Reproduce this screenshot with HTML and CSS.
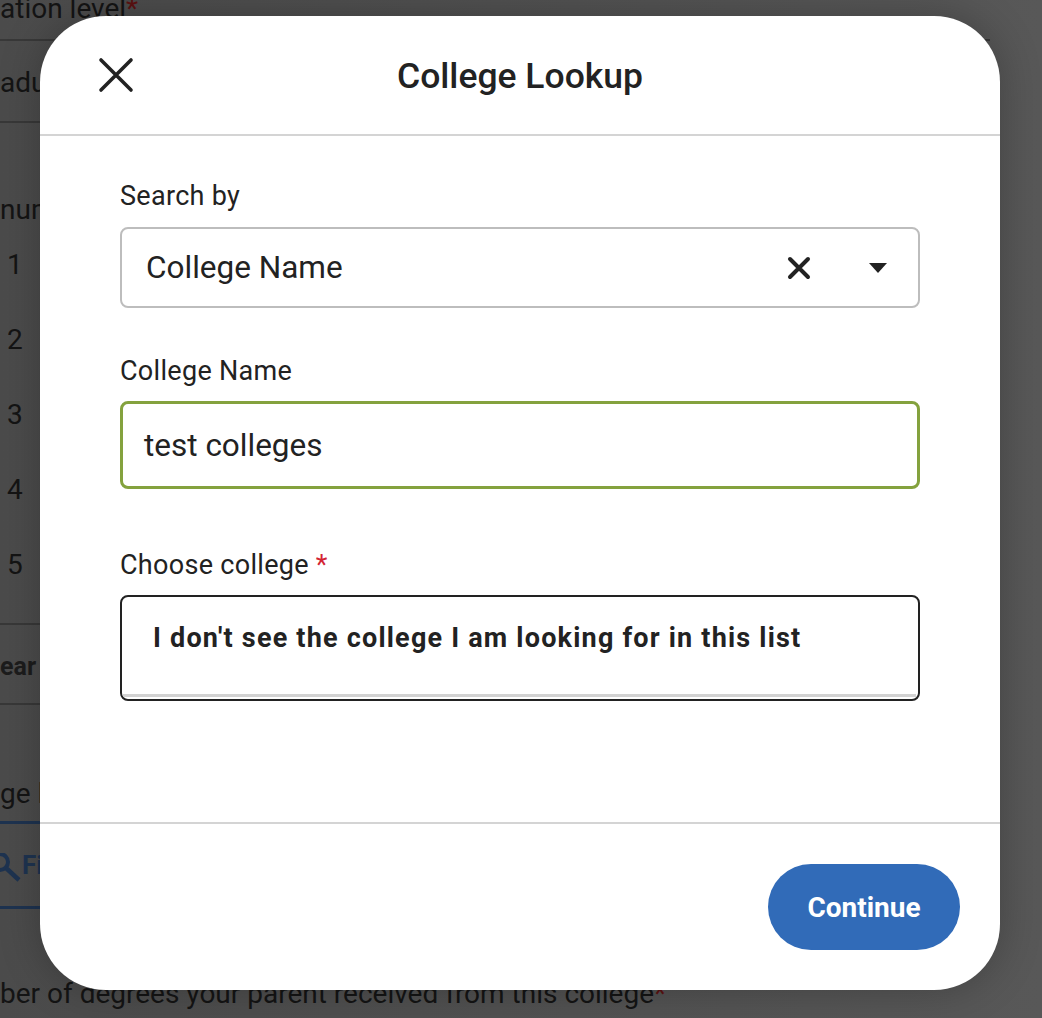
FILE: index.html
```html
<!DOCTYPE html>
<html>
<head>
<meta charset="utf-8">
<link rel="stylesheet" href="styles.css">
</head>
<body>
<div class="page">
  <div class="bg-form">
    <div class="bg-label top"><span class="cut">Parent's highest educ</span>ation level<span class="req">*</span></div>
    <div class="bg-field"><span class="cut">Gr</span>aduate</div>
    <div class="bg-label num"><span class="cut">Enter </span>number</div>
    <ol class="bg-list">
      <li>1</li><li>2</li><li>3</li><li>4</li><li>5</li>
    </ol>
    <div class="bg-field bold"><span class="cut">Cl</span>ear</div>
    <div class="bg-label college"><span class="cut">Colle</span>ge lookup</div>
    <div class="bg-find"><svg class="bg-mag" width="24" height="30" viewBox="0 0 24 30"><circle cx="0" cy="9" r="8" fill="none" stroke="#1e3350" stroke-width="4"/><line x1="6" y1="15" x2="19" y2="27" stroke="#1e3350" stroke-width="4.5"/></svg><span>Find</span></div>
    <div class="bg-label last"><span class="cut">Num</span>ber of degrees your parent received from this college<span class="req">*</span></div>
  </div>

  <div class="modal">
    <div class="modal-header">
      <button class="close-btn" aria-label="Close">
        <svg width="36" height="36" viewBox="0 0 36 36"><path d="M3 3 L33 33 M33 3 L3 33" stroke="#222" stroke-width="3.6" stroke-linecap="round"/></svg>
      </button>
      <h1 class="modal-title">College Lookup</h1>
    </div>
    <div class="modal-body">
      <div class="field">
        <label class="label">Search by</label>
        <div class="select">
          <span class="select-value">College Name</span>
          <svg class="select-clear" width="24" height="24" viewBox="0 0 24 24"><path d="M3 3 L21 21 M21 3 L3 21" stroke="#222" stroke-width="4" stroke-linecap="round"/></svg>
          <svg class="select-caret" width="20" height="12" viewBox="0 0 20 12"><path d="M1 1 L19 1 L10 11 Z" fill="#222"/></svg>
        </div>
      </div>
      <div class="field name">
        <label class="label">College Name</label>
        <div class="input">test colleges</div>
      </div>
      <div class="field choose">
        <label class="label">Choose college <span class="req-red">*</span></label>
        <div class="listbox">
          <div class="option">I don't see the college I am looking for in this list</div>
        </div>
      </div>
    </div>
    <div class="modal-footer">
      <button class="continue">Continue</button>
    </div>
  </div>
</div>
</body>
</html>
```

FILE: styles.css
```css
* { box-sizing: border-box; }
html, body { margin: 0; padding: 0; }
body {
  width: 1042px;
  height: 1018px;
  overflow: hidden;
  font-family: Roboto, "Liberation Sans", sans-serif;
  background: linear-gradient(90deg, #4b4b4b 0%, #505050 40%, #585858 100%);
}
.page {
  position: relative;
  width: 1042px;
  height: 1018px;
  overflow: hidden;
}

/* background form (dimmed under the overlay) */
.bg-form {
  width: 990px;
  color: #141414;
  font-size: 28px;
}
.cut {
  display: inline-flex;
  justify-content: flex-end;
  width: 0;
  white-space: nowrap;
}
.bg-label { line-height: 30px; height: 30px; white-space: nowrap; }
.bg-label.top { margin-top: -6px; }
.req { color: #5c1212; }
.bg-field {
  margin-top: 15px;
  border-top: 2px solid #383838;
  border-bottom: 2px solid #383838;
  height: 84px;
  display: flex;
  align-items: center;
  white-space: nowrap;
  padding-top: 2px;
}
.bg-field.bold {
  margin-top: 21px;
  height: 82px;
  font-weight: 700;
  font-size: 25px;
  color: #1c1c1c;
  padding-top: 4px;
}
.bg-label.num { margin-top: 72px; }
.bg-list {
  list-style: none;
  margin: 0;
  padding: 2px 0 0 7px;
}
.bg-list li { height: 75px; line-height: 75px; }
.bg-label.college { margin-top: 74px; }
.bg-find {
  margin-top: 12px;
  border-top: 3px solid #1e3350;
  border-bottom: 3px solid #1e3350;
  height: 88px;
  display: flex;
  align-items: center;
  gap: 0;
  color: #1e3350;
  font-weight: 700;
  font-size: 26px;
  white-space: nowrap;
}
.bg-mag { display: block; margin-right: -2px; margin-top: 6px; }
.bg-label.last { margin-top: 70px; }

/* modal */
.modal {
  position: absolute;
  left: 40px;
  top: 16px;
  width: 960px;
  height: 974px;
  background: #fff;
  border-radius: 66px;
  box-shadow: 0 0 40px rgba(0,0,0,0.25);
  display: flex;
  flex-direction: column;
}
.modal-header {
  height: 120px;
  border-bottom: 2px solid #d4d4d4;
  display: flex;
  align-items: center;
  justify-content: center;
  position: relative;
}
.close-btn {
  position: absolute;
  left: 58px;
  top: 41px;
  background: none;
  border: 0;
  padding: 0;
  width: 36px;
  height: 36px;
  display: block;
}
.close-btn svg { display: block; }
.modal-title {
  margin: 0;
  font-size: 35.5px;
  font-weight: 500;
  color: #222;
  padding-top: 2px;
}
.modal-body {
  flex: 1;
  padding: 45px 80px 0 80px;
  border-bottom: 2px solid #d4d4d4;
}
.label {
  display: block;
  font-size: 27px;
  letter-spacing: 0.3px;
  color: #222;
  line-height: 30px;
  margin-bottom: 16px;
}
.select {
  height: 81px;
  border: 2px solid #bdbdbd;
  border-radius: 8px;
  display: flex;
  align-items: center;
  padding: 0 30px 0 24px;
}
.select-value { flex: 1; font-size: 31.5px; color: #222; }
.select-clear { margin-right: 57px; }
.field.name { margin-top: 48px; }
.field.name .label { margin-bottom: 15px; }
.input {
  height: 88px;
  border: 3px solid #84a23e;
  border-radius: 8px;
  display: flex;
  align-items: center;
  padding-left: 21px;
  font-size: 31.5px;
  color: #222;
}
.field.choose { margin-top: 61px; }
.field.choose .label { margin-bottom: 15px; }
.req-red { color: #d32433; }
.listbox {
  height: 106px;
  border: 2px solid #222;
  border-radius: 8px;
  padding: 0 2px 0 0;
  overflow: hidden;
}
.option {
  height: 100px;
  border-bottom: 3px solid #d2d2d2;
  padding: 25px 0 0 31px;
  font-size: 27px;
  font-weight: 700;
  color: #222;
  letter-spacing: 1.2px;
  line-height: 32px;
  white-space: nowrap;
}
.modal-footer {
  height: 166px;
  display: flex;
  align-items: flex-start;
  justify-content: flex-end;
  padding: 40px 40px 0 0;
}
.continue {
  width: 192px;
  height: 86px;
  border: 0;
  border-radius: 43px;
  background: #316bb8;
  color: #fff;
  font-family: Roboto, "Liberation Sans", sans-serif;
  font-size: 28px;
  font-weight: 700;
}
```
